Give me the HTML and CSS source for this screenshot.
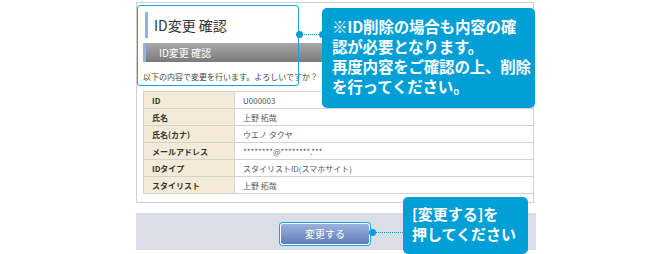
FILE: index.html
```html
<!DOCTYPE html>
<html lang="ja">
<head>
  <meta charset="UTF-8">
  <title>ID変更 確認</title>
  <link rel="stylesheet" href="styles.css">
</head>
<body>
  <div class="stage">
    <div class="panel">
      <h2 class="page-title">ID変更 確認</h2>
      <div class="section-bar">ID変更 確認</div>
      <p class="lead">以下の内容で変更を行います。よろしいですか？</p>

      <table class="confirm-table">
        <tr><th>ID</th><td>U000003</td></tr>
        <tr><th>氏名</th><td>上野 拓哉</td></tr>
        <tr><th>氏名(カナ)</th><td>ウエノ タクヤ</td></tr>
        <tr><th>メールアドレス</th><td>********@********.***</td></tr>
        <tr><th>IDタイプ</th><td>スタイリストID(スマホサイト)</td></tr>
        <tr><th>スタイリスト</th><td>上野 拓哉</td></tr>
      </table>
    </div>

    <div class="action-bar">
      <button class="submit-button">変更する</button>
    </div>

    <!-- annotations -->
    <div class="mark mark-header"></div>
    <div class="link link-top"></div>
    <div class="note note-top">※ID削除の場合も内容の確<br>認が必要となります。<br>再度内容をご確認の上、削除<br>を行ってください。</div>

    <div class="link link-bottom"></div>
    <div class="note note-bottom">[変更する]を<br>押してください</div>
  </div>
</body>
</html>
```

FILE: styles.css
```css
body {
  margin: 0;
  background: #fff;
  font-family: "Noto Sans CJK JP", "Noto Sans", sans-serif;
  color: #333;
}

.stage {
  position: relative;
  width: 670px;
  height: 254px;
  overflow: hidden;
}

.panel {
  margin: 2px 0 0 136px;
  width: 398px;
  height: 201px;
  border: 1px solid #d0d0d0;
  padding: 0 0 0 6px;
  box-sizing: border-box;
}

.page-title {
  margin: 9px 0 0 2px;
  padding-left: 6px;
  border-left: 3px solid #8fb3e2;
  height: 26px;
  line-height: 26px;
  font-size: 14px;
  font-weight: normal;
  color: #333;
}

.section-bar {
  margin-top: 5px;
  height: 19px;
  line-height: 19px;
  padding-left: 13px;
  border-left: 3px solid #8fb3e2;
  background: linear-gradient(#a8a8a8, #7a7a7a);
  color: #fff;
  font-size: 10px;
}

.lead {
  margin: 10px 0 0;
  font-size: 8px;
  line-height: 10px;
  color: #444;
}

.confirm-table {
  margin-top: 9px;
  width: 391px;
  border-collapse: collapse;
  font-size: 8px;
}

.confirm-table th,
.confirm-table td {
  height: 16px;
  padding: 0 0 0 8px;
  border: 1px solid #d2d2d2;
  text-align: left;
}

.confirm-table th {
  width: 82px;
  background: #f3ebd7;
  font-weight: bold;
  color: #333;
}

.confirm-table td {
  color: #555;
  border-right: none;
}

.action-bar {
  margin: 10px 0 0 136px;
  width: 400px;
  height: 37px;
  background: #dcdee7;
  box-sizing: border-box;
  padding: 6px 0 0 144px;
}

.submit-button {
  width: 90px;
  height: 22px;
  border: 1px solid #fff;
  border-radius: 3px;
  background: linear-gradient(#9ab2dc, #5f7cb6);
  color: #fff;
  font-family: inherit;
  font-size: 10px;
  box-shadow: 0 0 0 1px #1aa6dc;
}

.mark {
  position: absolute;
  border: 1px solid #1aa6dc;
  border-radius: 3px;
}

.mark-header {
  left: 137px;
  top: 5px;
  width: 160px;
  height: 79px;
}

.link {
  position: absolute;
  height: 0;
  border-top: 1px dotted #009fd6;
}

.link::before,
.link::after {
  content: "";
  position: absolute;
  top: -4px;
  width: 7px;
  height: 7px;
  border-radius: 50%;
  background: #009fd6;
}

.link::before { left: -3px; }
.link::after { right: -3px; }

.link-top {
  left: 299px;
  top: 34px;
  width: 24px;
}

.link-bottom {
  left: 372px;
  top: 232px;
  width: 31px;
}

.link-bottom::after { display: none; }

.note {
  position: absolute;
  background: #009fd6;
  color: #fff;
  font-weight: bold;
  border-radius: 5px;
  box-sizing: border-box;
}

.note-top {
  left: 322px;
  top: 8px;
  width: 213px;
  height: 100px;
  padding: 8px 0 0 10px;
  font-size: 15.5px;
  line-height: 20px;
  letter-spacing: -0.2px;
}

.note-bottom {
  left: 403px;
  top: 197px;
  width: 125px;
  height: 57px;
  padding: 7px 0 0 9px;
  font-size: 15px;
  line-height: 20px;
}
```
